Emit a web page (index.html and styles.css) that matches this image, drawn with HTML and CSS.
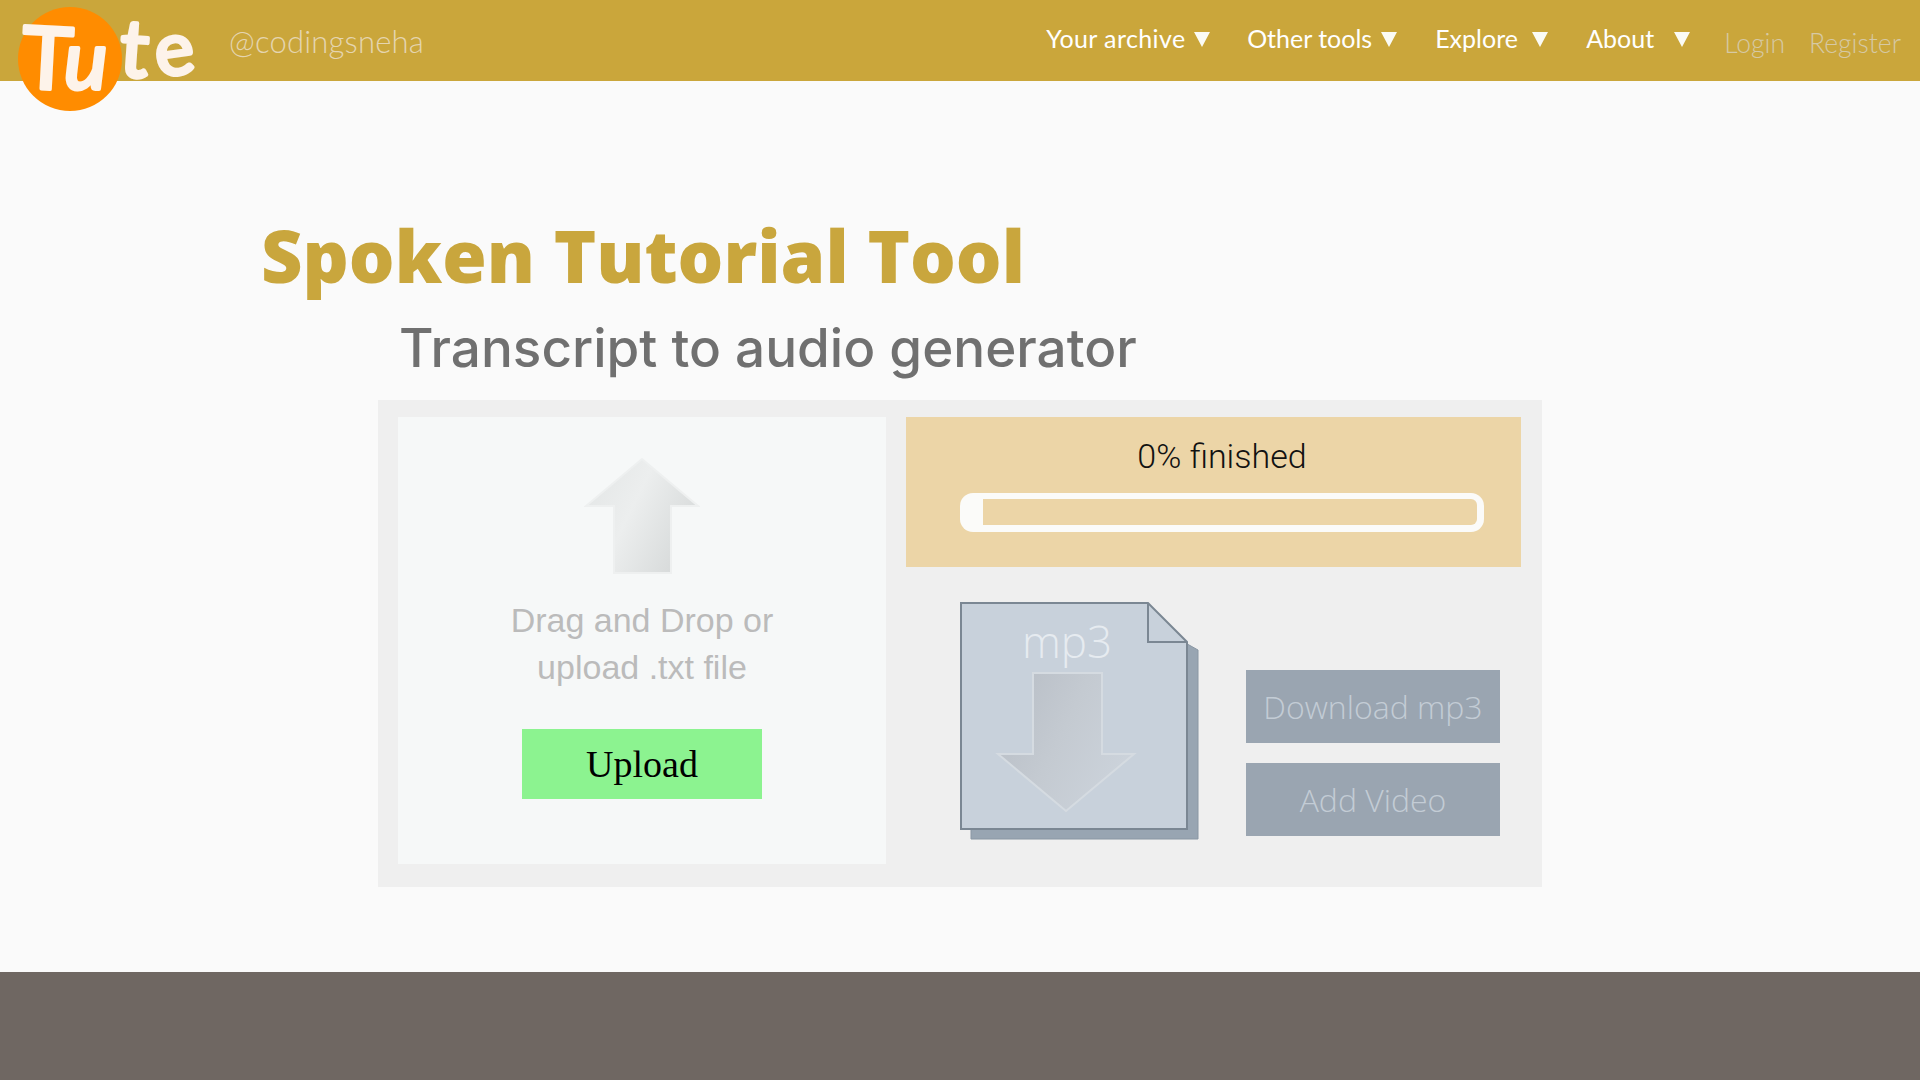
FILE: index.html
```html
<!DOCTYPE html>
<html lang="en">
<head>
    <meta charset="UTF-8">
    <title>Spoken Tutorial Tool</title>
    <link rel="stylesheet" href="styles.css">
</head>
<body>
    <header class="topbar">
        <svg class="logo" width="180" height="121" viewBox="0 -10 180 121">
            <circle cx="52" cy="52" r="52" fill="#ff8c00"/>
            <text class="logo-letter" x="4" y="82" font-size="86" transform="rotate(3 30 50)">T</text>
            <text class="logo-letter" x="46" y="82" font-size="82" font-style="italic">u</text>
            <text class="logo-letter" x="102" y="70" font-size="80" transform="rotate(4 120 45)">t</text>
            <text class="logo-letter" x="138" y="68" font-size="74" transform="rotate(-8 155 55)">e</text>
        </svg>
        <span class="handle">@codingsneha</span>
        <nav class="menu">
            <a class="item item-archive">Your archive<i class="caret"></i></a>
            <a class="item item-tools">Other tools<i class="caret"></i></a>
            <a class="item item-explore">Explore<i class="caret"></i></a>
            <a class="item item-about">About<i class="caret"></i></a>
            <a class="item auth">Login</a>
            <a class="item auth">Register</a>
        </nav>
    </header>

    <main class="content">
        <h1>Spoken Tutorial Tool</h1>
        <h2>Transcript to audio generator</h2>
        <section class="panel">
            <div class="dropzone">
                <svg class="up-arrow" width="116" height="118" viewBox="0 0 116 118">
                    <defs>
                        <linearGradient id="upfill" x1="0" y1="0" x2="1" y2="0.5">
                            <stop offset="0" stop-color="#e2e5e5"/>
                            <stop offset="0.5" stop-color="#eceeee"/>
                            <stop offset="1" stop-color="#d8dbdb"/>
                        </linearGradient>
                    </defs>
                    <path d="M2 49 L58 2 L114 49 L87 49 L87 116 L30 116 L30 49 Z" fill="url(#upfill)" stroke="#eef0f0" stroke-width="2"/>
                </svg>
                <p class="drop-text">Drag and Drop or<br>upload .txt file</p>
                <button class="upload-btn">Upload</button>
            </div>
            <div class="output">
                <div class="progress-box">
                    <div class="progress-label">0% finished</div>
                    <div class="bar"><div class="bar-track"></div></div>
                </div>
                <div class="result">
                    <div class="file-icon">
                        <svg width="240" height="240" viewBox="0 0 240 240">
                            <defs>
                                <linearGradient id="downfill" x1="0" y1="0" x2="1" y2="0.5">
                                    <stop offset="0" stop-color="#b6bcc4"/>
                                    <stop offset="0.55" stop-color="#c4cad1"/>
                                    <stop offset="1" stop-color="#cbd2da"/>
                                </linearGradient>
                            </defs>
                            <path d="M11 20 L188 20 L238 48 L238 237 L11 237 Z" fill="#98a5b2" stroke="#8a97a4" stroke-width="1"/>
                            <path d="M1 1 L188 1 L227 40 L227 227 L1 227 Z" fill="#c8d1db" stroke="#7b8793" stroke-width="2"/>
                            <path d="M188 1 L188 40 L227 40" fill="none" stroke="#7b8793" stroke-width="2"/>
                            <path d="M73 71 L142 71 L142 152 L174 152 L106 209 L38 152 L73 152 Z" fill="url(#downfill)" stroke="#d5dbe1" stroke-width="2"/>
                        </svg>
                        <span class="file-type">mp3</span>
                    </div>
                    <div class="actions">
                        <button class="action">Download mp3</button>
                        <button class="action">Add Video</button>
                    </div>
                </div>
            </div>
        </section>
    </main>

    <footer class="footer"></footer>
</body>
</html>
```

FILE: styles.css
```css
* {
    box-sizing: border-box;
}
body {
    margin: 0;
    background: #fafafa;
    font-family: 'Liberation Sans', Arial, sans-serif;
}

.topbar {
    display: flex;
    height: 81px;
    background: #caa63b;
    padding-left: 18px;
}
.logo {
    flex: none;
    margin-top: -3px;
}
.logo-letter {
    font-family: 'Lato', sans-serif;
    fill: #fdf3ea;
    stroke: #fdf3ea;
    stroke-width: 4px;
    stroke-linejoin: round;
}
.handle {
    margin: 22px 0 0 31px;
    font: 300 31px 'Lato', sans-serif;
    letter-spacing: 0.2px;
    color: #e5d5b0;
}
.menu {
    display: flex;
    margin-left: auto;
}
.item {
    display: flex;
    align-items: center;
    height: 32px;
    margin-top: 22px;
    font: 400 25px 'Lato', sans-serif;
    color: #fff;
}
.caret {
    width: 0;
    height: 0;
    margin-top: 2px;
    border-left: 8.5px solid transparent;
    border-right: 8.5px solid transparent;
    border-top: 15px solid #fbfbf5;
}
.item-archive { width: 201px; letter-spacing: 0.4px; }
.item-archive .caret { margin-left: 8px; }
.item-tools { width: 188px; }
.item-tools .caret { margin-left: 9px; }
.item-explore { width: 151px; }
.item-explore .caret { margin-left: 14px; }
.item-about { width: 138px; }
.item-about .caret { margin-left: 20px; }
.auth {
    margin-top: 27px;
    margin-right: 24px;
    font-size: 26.5px;
    font-weight: 300;
    color: #d6c9a4;
}
.auth:last-child {
    margin-right: 19px;
}

.content {
    height: 891px;
    padding-top: 129px;
}
h1 {
    margin: 0 0 0 261px;
    font: 800 72px/90px 'Open Sans', sans-serif;
    color: #c9a63d;
}
h2 {
    margin: 17px 0 0 399px;
    font: 500 53px/62px 'Inter', sans-serif;
    color: #707070;
}
.panel {
    display: flex;
    width: 1164px;
    height: 487px;
    margin: 21px 0 0 378px;
    padding: 17px 21px 0 20px;
    background: #efefef;
}

.dropzone {
    display: flex;
    flex-direction: column;
    align-items: center;
    width: 488px;
    height: 447px;
    background: #f6f8f8;
}
.up-arrow {
    margin-top: 40px;
}
.drop-text {
    margin: 22px 0 0;
    font-size: 34px;
    line-height: 47px;
    text-align: center;
    color: #bbb;
}
.upload-btn {
    width: 240px;
    height: 70px;
    margin-top: 38px;
    border: none;
    background: #8cf390;
    font: 38px 'Liberation Serif', serif;
    color: #000;
}

.output {
    width: 615px;
    margin-left: 20px;
}
.progress-box {
    height: 150px;
    padding-top: 19px;
    background: #ecd5a7;
}
.progress-label {
    padding-left: 17px;
    font: 300 34px/40px 'Roboto', sans-serif;
    text-align: center;
    color: #111;
}
.bar {
    display: flex;
    width: 524px;
    height: 39px;
    margin: 17px 0 0 54px;
    padding: 6px 7px 7px 23px;
    border-radius: 13px;
    background: #fbfbf9;
}
.bar-track {
    flex: 1;
    border-radius: 0 6px 6px 0;
    background: #ecd5a7;
}
.result {
    display: flex;
    margin-top: 35px;
    padding-left: 54px;
}
.file-icon {
    position: relative;
    width: 240px;
    height: 240px;
    flex: none;
}
.file-icon svg {
    display: block;
}
.file-type {
    position: absolute;
    top: 9px;
    left: 0;
    width: 214px;
    font: 300 44px/60px 'Open Sans', sans-serif;
    text-align: center;
    color: #e6ebf0;
}
.actions {
    display: flex;
    flex-direction: column;
    gap: 20px;
    margin: 68px 0 0 46px;
}
.action {
    width: 254px;
    height: 73px;
    border: none;
    background: #9aa5b1;
    font: 300 32px 'Open Sans', sans-serif;
    color: #c3ccd5;
}

.footer {
    height: 108px;
    background: #6f6762;
}
```
